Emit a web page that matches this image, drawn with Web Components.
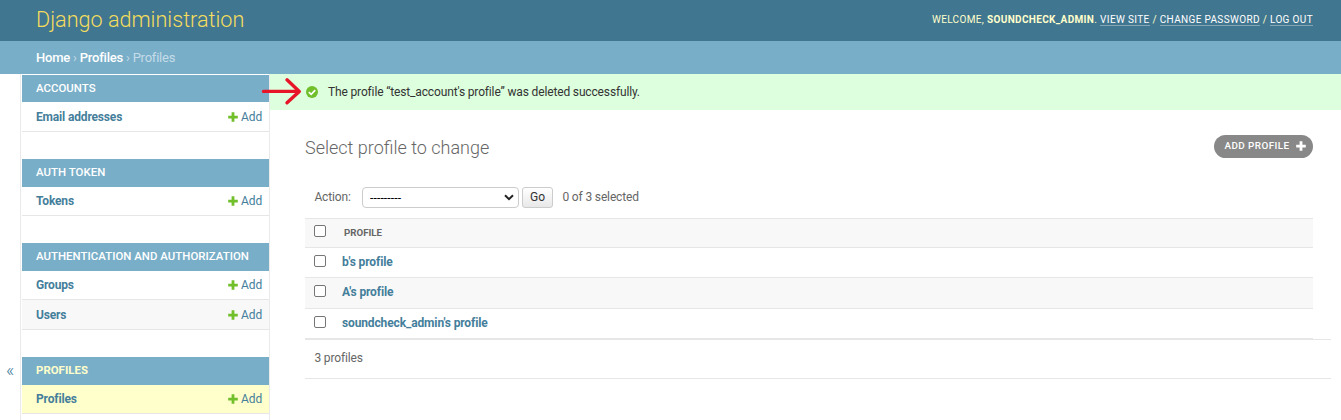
<!DOCTYPE html>
<html lang="en">
<head>
<meta charset="utf-8">
<title>Select profile to change | Django site admin</title>
<style>
html,body{margin:0;height:100%;overflow:hidden;background:#fff}
body{font-family:Roboto,"Liberation Sans",sans-serif;font-size:12.6px;color:#333}
</style>
</head>
<body>
<admin-page></admin-page>
<script>
const define = (name, html, setup) => customElements.define(name, class extends HTMLElement {
  connectedCallback() {
    if (this.shadowRoot) return;
    const t = document.createElement('template');
    t.innerHTML = html;
    this.attachShadow({mode: 'open'}).append(t.content.cloneNode(true));
    if (setup) setup(this, this.shadowRoot);
  }
});

define('plus-icon', `
<style>:host{display:inline-block;width:10px;height:10px;color:#70bf2b}svg{display:block;width:100%;height:100%}</style>
<svg viewBox="0 0 10 10"><path d="M3.6.2h2.8v3.5h3.4v2.7H6.4v3.4H3.6V6.4H.2V3.7h3.4z" fill="currentColor"/></svg>`);

define('site-header', `
<style>
:host{display:flex;justify-content:space-between;align-items:center;box-sizing:border-box;height:41px;padding:0 28px 0 36px;background:#417690;color:#ffc}
h1{margin:0;font-size:21.6px;font-weight:300;line-height:25px;color:#f5dd5d;padding-bottom:2px}
.tools{font-size:10px;font-weight:400;letter-spacing:.35px;text-transform:uppercase;line-height:12px;white-space:nowrap;padding-bottom:1px}
strong{font-weight:700}
a{color:#fff;border-bottom:1px solid rgba(255,255,255,.35)}
</style>
<h1>Django administration</h1>
<div class="tools">Welcome, <strong>soundcheck_admin</strong>. <a>View site</a> / <a>Change password</a> / <a>Log out</a></div>`);

define('bread-crumbs', `
<style>
:host{display:flex;align-items:center;box-sizing:border-box;height:33px;padding:0 36px;background:#79aec8;color:#c4dce8;font-size:13px;letter-spacing:-.22px;white-space:pre}
b{font-weight:500;color:#fff}
</style>
<b>Home</b> › <b>Profiles</b> › Profiles`);

define('nav-row', `
<style>
:host{display:flex;align-items:center;box-sizing:border-box;height:var(--h,29px);padding:0 7px 0 14px;border-bottom:1px solid #e6e6e6;font-size:12px;letter-spacing:-.16px;color:#447e9b}
:host([alt]){background:#f8f8f8}
:host([current]){background:#ffc}
b{flex:1;font-weight:700}
plus-icon{margin-right:3.3px}
</style>
<b><slot></slot></b><plus-icon></plus-icon><span>Add</span>`);

define('nav-module', `
<style>
:host{display:block;margin-bottom:27px}
h2{margin:0;height:var(--cap,28px);line-height:27px;padding-left:14px;background:#79aec8;color:#fff;font-size:11.4px;font-weight:500;letter-spacing:.04px;text-transform:uppercase;white-space:nowrap}
:host([current]) h2{color:#ffc;font-weight:700}
</style>
<h2></h2><slot></slot>`, (h, r) => r.querySelector('h2').textContent = h.getAttribute('label'));

define('nav-sidebar', `
<style>
:host{display:flex;flex:none;width:270px}
.toggle{width:20px;flex:none;display:flex;align-items:center;justify-content:center;border-right:1px solid #eaeaea;font-size:18px;font-weight:300;color:#447e9b}
.toggle span{height:22px;line-height:20px;margin-top:248px}
nav{flex:1;padding:1px 0 0 1px;border-right:1px solid #eaeaea}
</style>
<div class="toggle"><span>«</span></div>
<nav>
<nav-module label="Accounts" style="--cap:27px;--h:30px"><nav-row>Email addresses</nav-row></nav-module>
<nav-module label="Auth Token"><nav-row>Tokens</nav-row></nav-module>
<nav-module label="Authentication and Authorization"><nav-row>Groups</nav-row><nav-row alt style="--h:30px">Users</nav-row></nav-module>
<nav-module label="Profiles" current><nav-row current>Profiles</nav-row></nav-module>
</nav>`);

define('success-message', `
<style>
:host{display:flex;align-items:center;box-sizing:border-box;height:36px;padding-left:36px;background:#dfd;font-size:12px;letter-spacing:-.15px;color:#333;position:relative}
.ok{width:12px;height:12px;margin-right:10px}
.arrow{position:absolute;left:-10px;top:1px;width:42px;height:32px}
</style>
<svg class="ok" viewBox="0 0 12 12"><circle cx="6" cy="6" r="6" fill="#70bf2b"/><path d="M2.8 6.1 5.2 8.3 9.2 4.2" fill="none" stroke="#fff" stroke-width="1.7"/></svg>
<span><slot></slot></span>
<svg class="arrow" viewBox="0 0 42 32"><path d="M3.5 16.4H39M27 4.8 39.3 16.4 27 27.8" fill="none" stroke="#e81528" stroke-width="3.4" stroke-linecap="round" stroke-linejoin="round"/></svg>`);

define('check-box', `
<style>:host{display:block;width:12px;height:12px}
input{appearance:none;display:block;box-sizing:border-box;width:12px;height:12px;margin:0;border:1px solid #767676;border-radius:2px;background:#fff}</style>
<input type="checkbox" aria-label="Select">`);

define('add-button', `
<style>:host{display:flex;align-items:center;box-sizing:border-box;width:99px;height:23px;padding:0 7px 2px 10.5px;border-radius:12px;background:#888;color:#fff;font-size:9.9px;font-weight:500;letter-spacing:.42px;justify-content:space-between;white-space:nowrap}
plus-icon{color:#fff;margin-top:1px}</style>
<span>ADD PROFILE</span><plus-icon></plus-icon>`);

define('action-bar', `
<style>
:host{display:flex;align-items:center;height:21px;padding-left:9.4px;font-size:12px;letter-spacing:-.14px;color:#666}
.sel{position:relative;width:157px;height:21px;margin-right:3px}
.label{width:47.6px}
.label,.count{padding-bottom:1px}
select{appearance:none;box-sizing:border-box;width:100%;height:100%;padding:0 0 0 7px;border:1px solid #ccc;border-radius:4px;background:#fff;font:12px Roboto,sans-serif;letter-spacing:.15px;color:#000;display:block}
svg{position:absolute;right:5px;top:7px;width:10px;height:7px}
button{box-sizing:border-box;width:31px;height:21px;padding:0 0 1px;margin-right:9.4px;border:1px solid #ccc;border-radius:3px;background:linear-gradient(#fff,#e8e8e8);font:12px Roboto,sans-serif;color:#333}
</style>
<span class="label">Action:</span>
<div class="sel"><select aria-label="Action"><option>---------</option></select><svg viewBox="0 0 10 7"><path d="M1 1.2 5 5.2 9 1.2" fill="none" stroke="#222" stroke-width="2"/></svg></div>
<button>Go</button><span class="count">0 of 3 selected</span>`);

define('table-row', `
<style>
:host{display:flex;align-items:center;box-sizing:border-box;height:var(--h,30px);padding-left:9px;border-bottom:1px solid #e6e6e6;font-size:12px;letter-spacing:-.13px;font-weight:700;color:#447e9b}
:host([alt]){background:#f8f8f8;padding-bottom:1px}
:host([head]){border-top:1px solid #e6e6e6;font-size:9.7px;letter-spacing:0;color:#666;background:#f8f8f8}
check-box{margin:0 16px 3px 0}
span{margin-bottom:1px}
:host([head]) span{margin:0 0 1px 2px}
:host([head]) check-box{margin-bottom:4px}
</style>
<check-box></check-box><span><slot></slot></span>`);

define('change-list', `
<style>
:host{display:block;padding:25px 28px 0 35px}
header{display:flex;justify-content:space-between;height:52px}
h1{margin:0;font-size:18px;font-weight:300;line-height:26px;color:#666}
action-bar{margin-bottom:10px}
.pages{box-sizing:border-box;height:40px;line-height:37px;margin-right:-18px;padding-left:9.4px;border:solid #e6e6e6;border-width:1px 0;font-size:12px;letter-spacing:-.14px;color:#666}
</style>
<header><h1>Select profile to change</h1><add-button></add-button></header>
<action-bar></action-bar>
<table-row head>PROFILE</table-row>
<table-row>b's profile</table-row>
<table-row alt style="--h:31px">A's profile</table-row>
<table-row>soundcheck_admin's profile</table-row>
<div class="pages">3 profiles</div>`);

define('admin-page', `
<style>
:host{display:flex;flex-direction:column;height:420px;overflow:hidden}
.body{display:flex;flex:1;min-height:0}
main{flex:1;min-width:0}
</style>
<site-header></site-header><bread-crumbs></bread-crumbs>
<div class="body"><nav-sidebar></nav-sidebar>
<main><success-message>The profile “test_account's profile” was deleted successfully.</success-message><change-list></change-list></main></div>`);
</script>
</body>
</html>
